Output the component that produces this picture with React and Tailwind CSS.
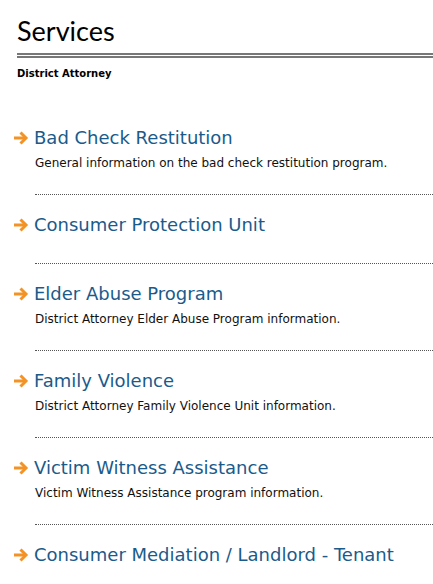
import React from "react";

const items = [
  { title: "Bad Check Restitution", desc: "General information on the bad check restitution program." },
  { title: "Consumer Protection Unit", desc: "" },
  { title: "Elder Abuse Program", desc: "District Attorney Elder Abuse Program information." },
  { title: "Family Violence", desc: "District Attorney Family Violence Unit information." },
  { title: "Victim Witness Assistance", desc: "Victim Witness Assistance program information." },
  { title: "Consumer Mediation / Landlord - Tenant", desc: "" },
];

function Arrow() {
  return (
    <svg width="16" height="14" viewBox="0 0 16 14" className="shrink-0">
      <path d="M1 7 H13" stroke="#f39325" strokeWidth="3" fill="none" />
      <path d="M7.5 1.5 L13 7 L7.5 12.5" stroke="#f39325" strokeWidth="3" fill="none" strokeLinecap="butt" strokeLinejoin="miter" />
    </svg>
  );
}

export default function App() {
  return (
    <div className="w-[433px] h-[584px] overflow-hidden bg-white">
      <div className="pl-[17px] pt-[13px]">
        <h1 className="text-[27px] leading-[36px] text-black font-normal" style={{ fontFamily: "Lato, sans-serif" }}>Services</h1>
        <div className="mt-[4px] h-[5px] border-y-2 border-[#777]" />
        <div className="mt-[9px] text-[10px] leading-[14px] font-bold text-black" style={{ fontFamily: "'DejaVu Sans', Verdana, sans-serif" }}>District Attorney</div>
      </div>
      <div className="mt-[45px] flex flex-col" style={{ fontFamily: "'DejaVu Sans', Verdana, sans-serif" }}>
        {items.map((it, i) => (
          <div key={i} className="flex flex-col mb-[18px]">
            <div className="flex items-center h-[24px] mb-[4px]">
              <div className="w-[34px] pl-[13px] flex items-center"><Arrow /></div>
              <span className="text-[18px] leading-[24px] text-[#1a5b8b] whitespace-nowrap">{it.title}</span>
            </div>
            {it.desc && (
              <div className="ml-[35px] text-[12px] leading-[18px] text-[#111]">{it.desc}</div>
            )}
            <div className="ml-[35px] mt-[22px] border-t border-dotted border-[#555]" />
          </div>
        ))}
      </div>
    </div>
  );
}
